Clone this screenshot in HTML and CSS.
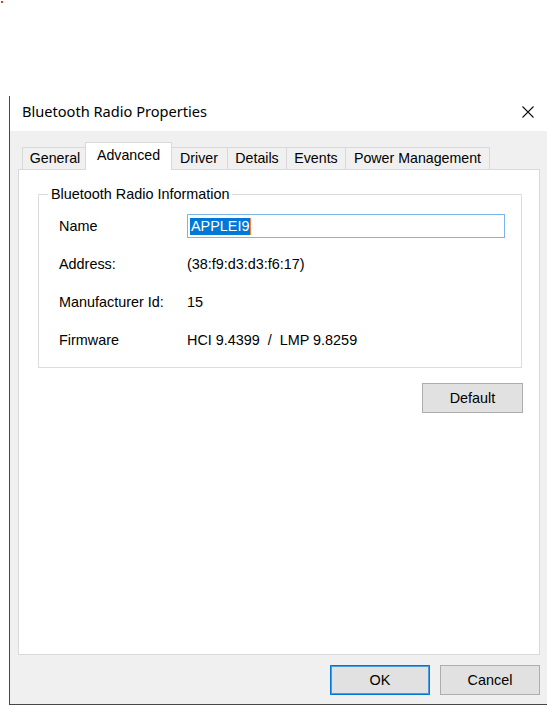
FILE: index.html
```html
<!DOCTYPE html>
<html>
<head>
<meta charset="utf-8">
<link rel="stylesheet" href="styles.css">
</head>
<body>
<span class="dot"></span>
<div class="window">
  <div class="titlebar">
    <span class="title">Bluetooth Radio Properties</span>
    <svg class="close" width="12" height="12" viewBox="0 0 12 12"><path d="M0.5 0.5L11.5 11.5M11.5 0.5L0.5 11.5" stroke="#111" stroke-width="1.1" fill="none"/></svg>
  </div>
  <div class="content">
    <div class="tabs">
      <div class="tab tab-general">General</div>
      <div class="tab tab-advanced active">Advanced</div>
      <div class="tab tab-driver">Driver</div>
      <div class="tab tab-details">Details</div>
      <div class="tab tab-events">Events</div>
      <div class="tab tab-power">Power Management</div>
    </div>
    <div class="panel">
      <fieldset class="group">
        <legend>Bluetooth Radio Information</legend>
        <div class="grid">
          <span class="label">Name</span>
          <div class="input"><span class="sel">APPLEI9</span><span class="caret"></span></div>
          <span class="label">Address:</span>
          <span class="value">(38:f9:d3:d3:f6:17)</span>
          <span class="label">Manufacturer Id:</span>
          <span class="value">15</span>
          <span class="label">Firmware</span>
          <span class="value">HCI 9.4399&nbsp; /&nbsp; LMP 9.8259</span>
        </div>
      </fieldset>
      <div class="panel-actions">
        <button class="btn wide">Default</button>
      </div>
    </div>
    <div class="actions">
      <button class="btn primary">OK</button>
      <button class="btn">Cancel</button>
    </div>
  </div>
</div>
</body>
</html>
```
FILE: styles.css
```css
html, body {
  margin: 0;
  padding: 0;
}
body {
  width: 547px;
  height: 706px;
  overflow: hidden;
  background: #ffffff;
  font-family: "Liberation Sans", Arial, sans-serif;
  font-size: 14.4px;
  color: #000;
  position: relative;
}
.dot {
  position: absolute;
  left: 1px;
  top: 1px;
  width: 2px;
  height: 2px;
  background: #e8322e;
}
.window {
  margin: 96px 0 0 9px;
  width: 540px;
  height: 608px;
  border-left: 1px solid #474747;
  border-bottom: 1px solid #474747;
  background: #f0f0f0;
  display: flex;
  flex-direction: column;
}
.titlebar {
  height: 35px;
  flex: none;
  background: #ffffff;
  display: flex;
  align-items: center;
  padding-left: 12px;
}
.title {
  font-family: "Noto Sans", "Open Sans", sans-serif;
  font-size: 14.6px;
  color: #000;
  padding-bottom: 5px;
}
.close {
  margin-left: auto;
  margin-right: 16px;
  margin-bottom: 4px;
  display: block;
}
.content {
  flex: 1;
  display: flex;
  flex-direction: column;
  padding: 11px 10px 9px 8px;
  min-height: 0;
}
.tabs {
  display: flex;
  align-items: flex-end;
  height: 27px;
  margin-left: 4px;
  position: relative;
  z-index: 2;
  font-size: 14.2px;
}
.tab {
  box-sizing: border-box;
  height: 22px;
  padding-bottom: 1px;
  border: 1px solid #d9d9d9;
  border-bottom: none;
  background: #f0f0f0;
  display: flex;
  align-items: center;
  justify-content: center;
  white-space: nowrap;
  margin-right: -1px;
}
.tab-general { width: 66px; }
.tab-advanced { width: 87px; }
.tab-driver { width: 58px; }
.tab-details { width: 60px; }
.tab-events { width: 60px; }
.tab-power { width: 145px; }
.tab.active {
  height: 28px;
  padding-bottom: 4px;
  margin: 0 -2px -1px -2px;
  background: #ffffff;
  position: relative;
  z-index: 2;
}
.panel {
  flex: 1;
  background: #ffffff;
  border: 1px solid #d9d9d9;
  display: flex;
  flex-direction: column;
}
.group {
  margin: 16px 17px 0 19px;
  padding: 12px 0 15px 0;
  border: 1px solid #dcdcdc;
  min-width: 0;
}
.group legend {
  margin-left: 9px;
  padding: 0 3px;
  line-height: 16px;
}
.grid {
  display: grid;
  grid-template-columns: 128px 1fr;
  grid-auto-rows: 24px;
  row-gap: 14px;
  align-items: center;
  margin-left: 20px;
}
.input {
  box-sizing: border-box;
  width: 318px;
  height: 24px;
  border: 1px solid #7ab4ea;
  padding-left: 2px;
  display: flex;
  align-items: center;
}
.sel {
  background: #0078d7;
  color: #ffffff;
  line-height: 17px;
  padding: 0 1px;
}
.caret {
  width: 1px;
  height: 17px;
  background: #f0883e;
}
.panel-actions {
  display: flex;
  justify-content: flex-end;
  margin: 15px 16px 0 0;
}
.btn {
  box-sizing: border-box;
  width: 100px;
  height: 30px;
  border: 1px solid #adadad;
  background: #e1e1e1;
  font-family: "Liberation Sans", Arial, sans-serif;
  font-size: 14.4px;
  color: #000;
  padding: 0;
  margin: 0;
}
.btn.wide {
  width: 101px;
}
.btn.primary {
  border: 1px solid #0078d7;
  box-shadow: inset 0 0 0 1px #4a9ae2;
}
.actions {
  display: flex;
  justify-content: flex-end;
  gap: 10px;
  margin-top: 10px;
}
```
